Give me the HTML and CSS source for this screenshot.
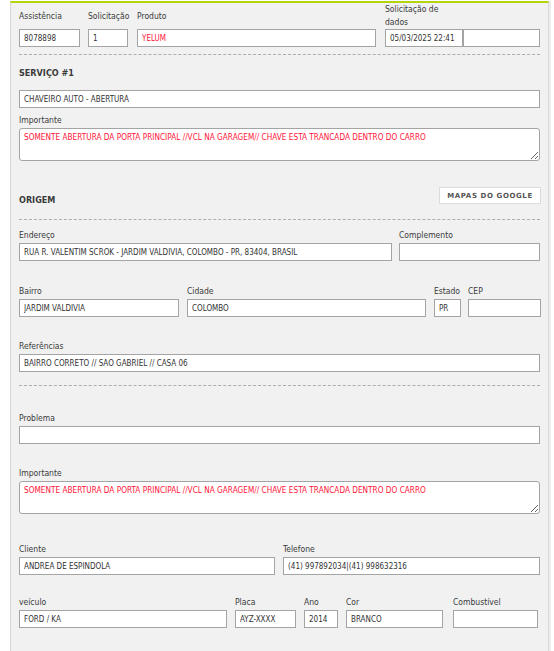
FILE: index.html
```html
<!DOCTYPE html>
<html lang="pt-BR">
<head>
<meta charset="utf-8">
<title>Atendimento</title>
<link rel="stylesheet" href="styles.css">
</head>
<body>
<div class="panel">
  <div class="row1">
    <label class="lbl r1-l1">Assistência</label>
    <label class="lbl r1-l2">Solicitação</label>
    <label class="lbl r1-l3">Produto</label>
    <label class="lbl r1-l4">Solicitação de<br>dados</label>
    <input class="inp r1-i1" value="8078898" readonly>
    <input class="inp r1-i2" value="1" readonly>
    <input class="inp red r1-i3" value="YELUM" readonly>
    <input class="inp r1-i4" value="05/03/2025 22:41" readonly>
    <input class="inp r1-i5" value="" readonly>
  </div>

  <div class="hr hr1"></div>

  <h2 class="title t-serv">SERVIÇO #1</h2>
  <input class="inp full serv" value="CHAVEIRO AUTO - ABERTURA" readonly>

  <div class="field imp1">
    <label class="lbl">Importante</label>
    <textarea class="ta red" readonly>SOMENTE ABERTURA DA PORTA PRINCIPAL //VCL NA GARAGEM// CHAVE ESTA TRANCADA DENTRO DO CARRO</textarea>
  </div>

  <div class="origem">
    <h2 class="title">ORIGEM</h2>
    <button class="btn">MAPAS DO GOOGLE</button>
  </div>

  <div class="hr hr2"></div>

  <div class="grid g-end">
    <div class="field"><label class="lbl">Endereço</label><input class="inp" value="RUA R. VALENTIM SCROK - JARDIM VALDIVIA, COLOMBO - PR, 83404, BRASIL" readonly></div>
    <div class="field"><label class="lbl">Complemento</label><input class="inp" value="" readonly></div>
  </div>

  <div class="grid g-bairro">
    <div class="field"><label class="lbl">Bairro</label><input class="inp" value="JARDIM VALDÍVIA" readonly></div>
    <div class="field"><label class="lbl">Cidade</label><input class="inp" value="COLOMBO" readonly></div>
    <div class="field"><label class="lbl">Estado</label><input class="inp" value="PR" readonly></div>
    <div class="field"><label class="lbl">CEP</label><input class="inp" value="" readonly></div>
  </div>

  <div class="field ref">
    <label class="lbl">Referências</label>
    <input class="inp" value="BAIRRO CORRETO // SAO GABRIEL // CASA 06" readonly>
  </div>

  <div class="hr hr3"></div>

  <div class="field prob">
    <label class="lbl">Problema</label>
    <input class="inp" value="" readonly>
  </div>

  <div class="field imp2">
    <label class="lbl">Importante</label>
    <textarea class="ta red" readonly>SOMENTE ABERTURA DA PORTA PRINCIPAL //VCL NA GARAGEM// CHAVE ESTA TRANCADA DENTRO DO CARRO</textarea>
  </div>

  <div class="grid g-cli">
    <div class="field"><label class="lbl">Cliente</label><input class="inp" value="ANDREA DE ESPINDOLA" readonly></div>
    <div class="field"><label class="lbl">Telefone</label><input class="inp" value="(41) 997892034|(41) 998632316" readonly></div>
  </div>

  <div class="grid g-veic">
    <div class="field"><label class="lbl">veículo</label><input class="inp" value="FORD / KA" readonly></div>
    <div class="field"><label class="lbl">Placa</label><input class="inp" value="AYZ-XXXX" readonly></div>
    <div class="field"><label class="lbl">Ano</label><input class="inp" value="2014" readonly></div>
    <div class="field"><label class="lbl">Cor</label><input class="inp" value="BRANCO" readonly></div>
    <div class="field"><label class="lbl">Combustível</label><input class="inp" value="" readonly></div>
  </div>
</div>
</body>
</html>
```

FILE: styles.css
```css
* { box-sizing: border-box; }
html, body {
  margin: 0;
  padding: 0;
  background: #ffffff;
  overflow: hidden;
  font-family: "DejaVu Sans Condensed", "DejaVu Sans", sans-serif;
}
.panel {
  margin: 1px 0 0 10px;
  width: 539px;
  height: 650px;
  background: #f1f1f1;
  border-top: 2px solid #b6d40c;
  border-left: 1px solid #d6d6d6;
  border-right: 1px solid #d9d9d9;
  box-shadow: 2px 0 0 #ececec;
  padding: 0 8px;
  display: flex;
  flex-direction: column;
}
.lbl {
  display: block;
  font-size: 8.5px;
  line-height: 14px;
  color: #3a3a3a;
  white-space: nowrap;
}
.inp {
  display: block;
  width: 100%;
  height: 18px;
  margin: 0;
  padding: 0 4px;
  border: 1px solid #a4a4a4;
  border-radius: 0;
  background: #ffffff;
  font-family: "DejaVu Sans Condensed", "DejaVu Sans", sans-serif;
  font-size: 8px;
  color: #333333;
  outline: none;
}
.red { color: #ff1438; }
.ta {
  display: block;
  width: 100%;
  height: 33px;
  margin: 0;
  padding: 3px 4px;
  border: 1px solid #a4a4a4;
  border-radius: 3px;
  background: #ffffff;
  font-family: "DejaVu Sans Condensed", "DejaVu Sans", sans-serif;
  font-size: 8.2px;
  line-height: 11px;
  outline: none;
  resize: vertical;
}
.field {
  display: flex;
  flex-direction: column;
  gap: 1px;
}

/* first row: fixed columns with explicit gutters */
.row1 {
  display: grid;
  grid-template-columns: 61px 8px 40px 9px 239px 9px 78px 77px;
  grid-template-rows: 26px 18px;
}
.row1 .lbl { align-self: center; line-height: 13px; grid-row: 1; }
.r1-l1 { grid-column: 1; }
.r1-l2 { grid-column: 3; }
.r1-l3 { grid-column: 5; }
.r1-l4 { grid-column: 7 / span 2; }
.r1-i1 { grid-row: 2; grid-column: 1; }
.r1-i2 { grid-row: 2; grid-column: 3; }
.r1-i3 { grid-row: 2; grid-column: 5; }
.r1-i4 { grid-row: 2; grid-column: 7; }
.r1-i5 { grid-row: 2; grid-column: 8; }

.hr {
  height: 0;
  border-top: 1px dashed #adadad;
}
.hr1 { margin-top: 7px; }
.hr2 { margin-top: 15px; }
.hr3 { margin-top: 13px; }
.title {
  margin: 0;
  font-size: 9px;
  line-height: 12px;
  font-weight: bold;
  color: #3a3a3a;
}
.t-serv { margin-top: 12px; }
.serv { margin-top: 11px; }
.imp1 { margin-top: 5px; }
.origem {
  margin-top: 26px;
  display: flex;
  justify-content: space-between;
  align-items: flex-end;
}
.origem .title { margin-bottom: -2px; }
.btn {
  width: 102px;
  height: 17px;
  margin: 0 -1px 0 0;
  padding: 0;
  background: #ffffff;
  border: 1px solid #dcdcdc;
  font-family: "DejaVu Sans", sans-serif;
  font-size: 7px;
  font-weight: bold;
  letter-spacing: 0.6px;
  color: #555555;
}
.grid { display: grid; }
.g-end {
  margin-top: 8px;
  grid-template-columns: 373px 141px;
  column-gap: 7px;
}
.g-bairro {
  margin-top: 23px;
  grid-template-columns: 160px 239px 27px 72px;
  column-gap: 8px;
}
.g-bairro > :nth-child(4) { margin-left: -1px; width: 73px; }
.ref { margin-top: 22px; }
.prob { margin-top: 25px; }
.imp2 { margin-top: 22px; }
.g-cli {
  margin-top: 28px;
  grid-template-columns: 256px 257px;
  column-gap: 8px;
}
.g-veic {
  margin-top: 20px;
  grid-template-columns: 208px 61px 34px 97px 87px;
  column-gap: 8px;
}
.g-veic > :nth-child(5) { margin-left: 2px; width: 85px; }
```
